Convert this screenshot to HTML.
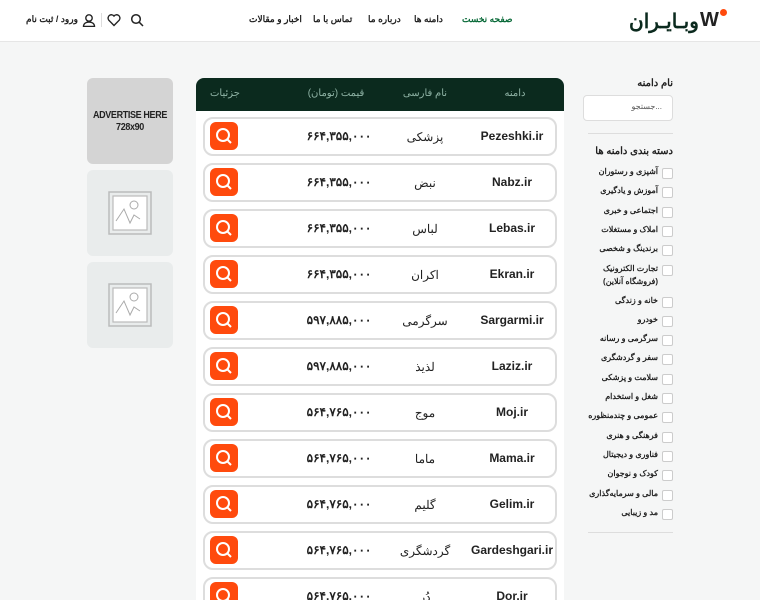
<!DOCTYPE html>
<html><head><meta charset="utf-8"><style>
*{box-sizing:border-box;margin:0;padding:0}
html,body{width:760px;height:600px;overflow:hidden}
body{background:#f5f6f6;font-family:"Liberation Sans","Noto Sans CJK SC",sans-serif;position:relative;color:#222}
.hdr{position:absolute;left:0;top:0;width:760px;height:42px;background:#fff;border-bottom:1px solid #e6e6e6}
.abs{position:absolute}
.nav{position:absolute;top:14px;font-size:9px;font-weight:bold;color:#222}
.tbl{position:absolute;left:196px;top:78px;width:368px;height:522px;background:#fff;border-radius:8px 8px 0 0}
.th{height:33px;background:#0b2a1e;border-radius:8px 8px 0 0;position:relative;color:#8fb3a5;font-size:10px}
.th span{position:absolute;top:10px;width:80px;text-align:center}
.row{position:absolute;width:354px;height:39px;border:2px solid #ddd;border-radius:10px;background:#fff}
.row div{position:absolute;text-align:center;white-space:nowrap}
.row .d{left:247px;width:120px;top:10px;font-weight:bold;font-size:12px}
.row .f{left:180px;width:80px;top:11px;font-size:12px}
.row .p{left:84px;width:100px;top:10px;font-size:12px;font-weight:bold}
.row .b{left:5px;top:3px;width:28px;height:28px;background:#ff4a0d;border-radius:6px}
.side{position:absolute;left:583px;width:90px}
.cb{position:absolute;right:0;width:11px;height:11px;border:1px solid #ccc;border-radius:2px;background:#fff}
.cl{position:absolute;right:15px;font-size:8px;font-weight:bold;text-align:right;white-space:nowrap;line-height:13px}
.ad{position:absolute;left:87px;width:86px;height:86px;border-radius:6px;background:#e9ecec}
</style></head><body>
<div class="hdr">
 <div class="abs" style="left:629px;top:9px;font-size:20px;font-weight:bold;color:#0b2a1e">وبـایـران</div>
 <div class="abs" style="left:700px;top:10px;width:26px;height:20px;font-size:20px;font-weight:900;line-height:20px">W</div>
 <div class="abs" style="left:720px;top:9px;width:7px;height:7px;border-radius:50%;background:#ff4a0d"></div>
 <div class="nav" style="left:462px;color:#0b6b3a">صفحه نخست</div>
 <div class="nav" style="left:414px">دامنه ها</div>
 <div class="nav" style="left:368px">درباره ما</div>
 <div class="nav" style="left:313px">تماس با ما</div>
 <div class="nav" style="left:249px">اخبار و مقالات</div>
 <div class="nav" style="left:26px">ورود / ثبت نام</div>
 <svg class="abs" style="left:82px;top:13px" width="14" height="14" viewBox="0 0 14 14"><circle cx="7" cy="5" r="3.2" fill="none" stroke="#222" stroke-width="1.4"/><path d="M1.5 13.5c0-3 2.5-4.5 5.5-4.5s5.5 1.5 5.5 4.5z" fill="none" stroke="#222" stroke-width="1.4"/></svg>
 <div class="abs" style="left:101px;top:13px;width:1px;height:14px;background:#ddd"></div>
 <svg class="abs" style="left:107px;top:13px" width="14" height="14" viewBox="0 0 14 14"><path d="M7 12.5L1.8 7.2A3 3 0 0 1 7 3a3 3 0 0 1 5.2 4.2z" fill="none" stroke="#222" stroke-width="1.4"/></svg>
 <svg class="abs" style="left:130px;top:13px" width="14" height="14" viewBox="0 0 14 14"><circle cx="6" cy="6" r="4.3" fill="none" stroke="#222" stroke-width="1.5"/><path d="M9.2 9.2L13 13" stroke="#222" stroke-width="1.5"/></svg>
</div>

<div class="ad" style="top:78px;background:#d4d4d4"><div style="text-align:center;font-weight:900;font-size:10px;margin-top:32px;line-height:12px;color:#222;letter-spacing:-0.4px;transform:scaleX(0.9)">ADVERTISE&nbsp;HERE<br>728x90</div></div>
<div class="ad" style="top:170px"><svg style="position:absolute;left:21px;top:21px" width="44" height="44" viewBox="0 0 44 44"><rect x="1" y="1" width="42" height="42" fill="none" stroke="#bbb" stroke-width="1.5"/><rect x="5" y="5" width="34" height="34" fill="#fff" stroke="#bbb" stroke-width="1.2"/><circle cx="26" cy="14" r="4" fill="none" stroke="#aaa"/><path d="M8 30l8-12 6 14 4-8 6 4" fill="none" stroke="#aaa"/></svg></div>
<div class="ad" style="top:262px"><svg style="position:absolute;left:21px;top:21px" width="44" height="44" viewBox="0 0 44 44"><rect x="1" y="1" width="42" height="42" fill="none" stroke="#bbb" stroke-width="1.5"/><rect x="5" y="5" width="34" height="34" fill="#fff" stroke="#bbb" stroke-width="1.2"/><circle cx="26" cy="14" r="4" fill="none" stroke="#aaa"/><path d="M8 30l8-12 6 14 4-8 6 4" fill="none" stroke="#aaa"/></svg></div>

<div class="tbl">
 <div class="th"><span style="left:279px">دامنه</span><span style="left:189px">نام فارسی</span><span style="left:100px">قیمت (تومان)</span><span style="left:-11px">جزئیات</span></div>
</div>
<div id="rows"></div>

<div class="side" style="top:78px">
 <div style="text-align:right;font-size:10px;font-weight:bold">نام دامنه</div>
 <div style="margin-top:6px;height:26px;border:1.5px solid #ddd;border-radius:4px;background:#fff;font-size:8px;text-align:right;padding:6px 10px;color:#555">جستجو...</div>
 <div style="margin:12px 0 0 5px;height:1px;background:#ddd"></div>
 <div style="margin-top:12px;text-align:right;font-size:10px;font-weight:bold">دسته بندی دامنه ها</div>
</div>
<div class="side" style="top:168px;height:360px" id="cats"></div>
<div class="abs" style="left:588px;top:532px;width:85px;height:1px;background:#ddd"></div>

<script>
var rows=[["Pezeshki.ir","پزشکی","۶۶۴,۳۵۵,۰۰۰"],["Nabz.ir","نبض","۶۶۴,۳۵۵,۰۰۰"],["Lebas.ir","لباس","۶۶۴,۳۵۵,۰۰۰"],["Ekran.ir","اکران","۶۶۴,۳۵۵,۰۰۰"],["Sargarmi.ir","سرگرمی","۵۹۷,۸۸۵,۰۰۰"],["Laziz.ir","لذیذ","۵۹۷,۸۸۵,۰۰۰"],["Moj.ir","موج","۵۶۴,۷۶۵,۰۰۰"],["Mama.ir","ماما","۵۶۴,۷۶۵,۰۰۰"],["Gelim.ir","گلیم","۵۶۴,۷۶۵,۰۰۰"],["Gardeshgari.ir","گردشگری","۵۶۴,۷۶۵,۰۰۰"],["Dor.ir","دُر","۵۶۴,۷۶۵,۰۰۰"]];
var h="";rows.forEach(function(r,i){var t=117+i*46;
h+='<div class="row" style="left:203px;top:'+t+'px"><div class="d">'+r[0]+'</div><div class="f">'+r[1]+'</div><div class="p">'+r[2]+'</div><div class="b"><svg width="28" height="28" viewBox="0 0 28 28"><circle cx="13" cy="13" r="6" fill="none" stroke="#fff" stroke-width="2"/><path d="M17.5 17.5L21 21" stroke="#fff" stroke-width="2"/></svg></div></div>';});
document.getElementById("rows").innerHTML=h;
var c=["آشپزی و رستوران","آموزش و یادگیری","اجتماعی و خبری","املاک و مستغلات","برندینگ و شخصی","تجارت الکترونیک<br>(فروشگاه آنلاین)","خانه و زندگی","خودرو","سرگرمی و رسانه","سفر و گردشگری","سلامت و پزشکی","شغل و استخدام","عمومی و چندمنظوره","فرهنگی و هنری","فناوری و دیجیتال","کودک و نوجوان","مالی و سرمایه‌گذاری","مد و زیبایی"];
var y=0,s="";c.forEach(function(x,i){s+='<div class="cb" style="top:'+y+'px"></div><div class="cl" style="top:'+(y-3)+'px">'+x+'</div>';y+=(i==5?32:19.3);});
document.getElementById("cats").innerHTML=s;
</script>
</body></html>
